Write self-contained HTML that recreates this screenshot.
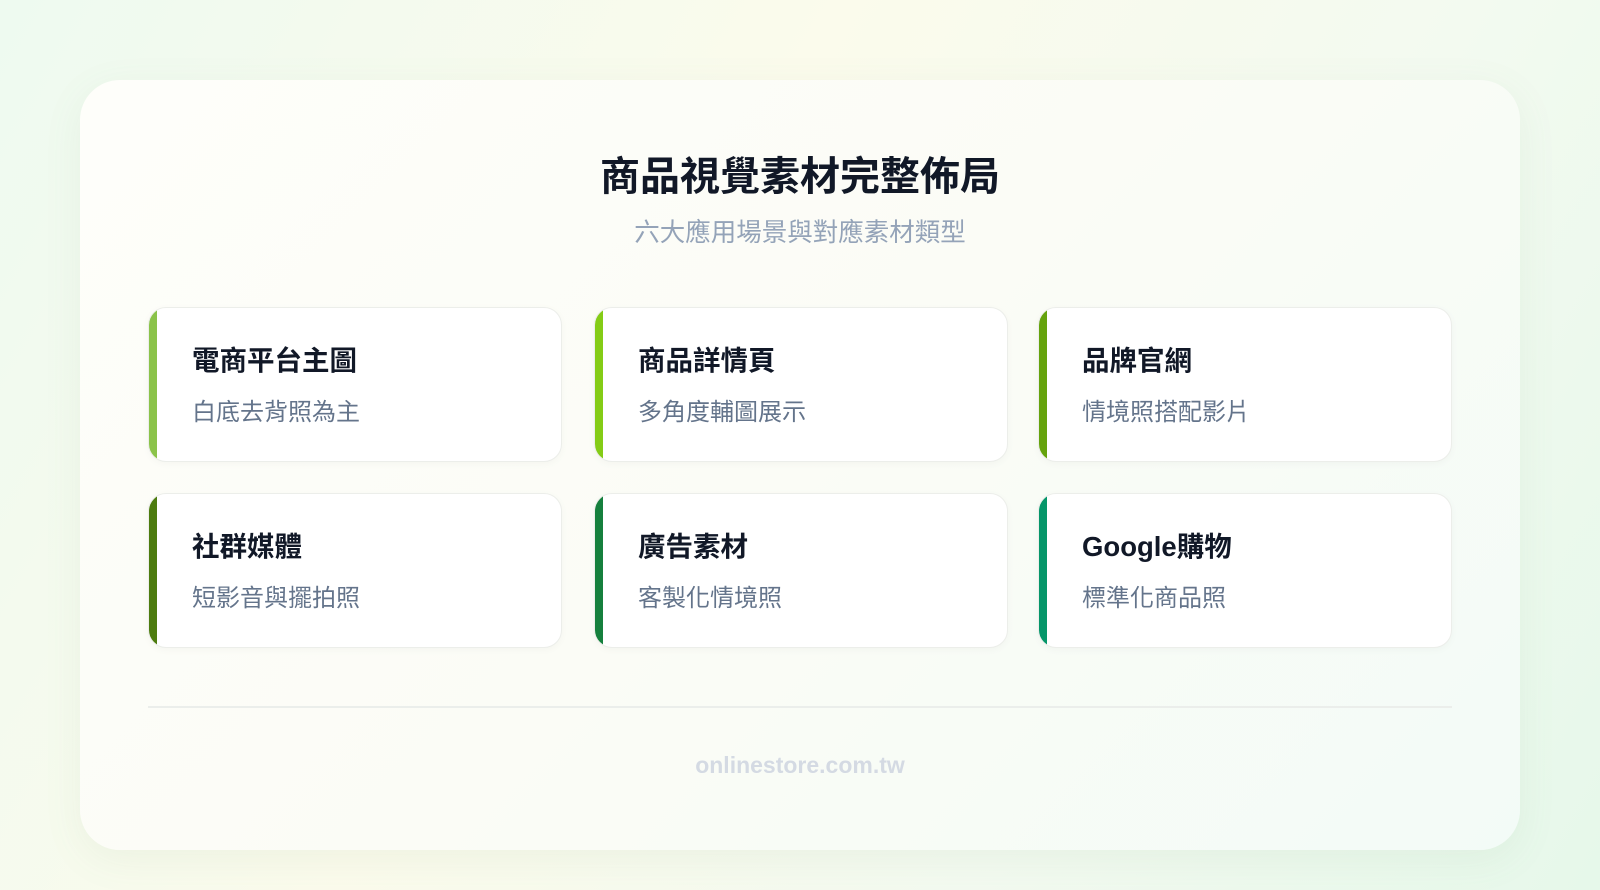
<!DOCTYPE html>
<html><head><meta charset="utf-8"><style>
*{margin:0;padding:0;box-sizing:border-box}
html,body{width:1600px;height:890px;overflow:hidden}
body{font-family:"Liberation Sans","Noto Sans CJK TC",sans-serif;background:linear-gradient(120deg,#eefaf0 0%,#fbfbec 40%,#f3faf0 70%,#e6f8ea 100%);position:relative}
.box{position:absolute;left:80px;top:80px;width:1440px;height:770px;border-radius:40px;background:linear-gradient(135deg,#fefefa 0%,#fbfcf6 50%,#f3fbf7 100%);box-shadow:0 10px 40px rgba(100,140,100,.08)}
h1{position:absolute;left:0;width:100%;top:150px;text-align:center;font-size:40px;font-weight:700;color:#111827;line-height:54px}
.sub{position:absolute;left:0;width:100%;top:216px;text-align:center;font-size:25.5px;color:#94a3b8;line-height:34px}
.card{position:absolute;width:414px;height:155px;background:#fff;border-radius:18px;border:1px solid #eceeea;box-shadow:0 2px 8px rgba(0,0,0,.03);overflow:hidden}
.card:before{content:"";position:absolute;left:0;top:0;bottom:0;width:8px;background:var(--c)}
.card .t{position:absolute;left:43px;top:35px;font-size:27.5px;font-weight:700;color:#111827;line-height:36px}
.card .d{position:absolute;left:43px;top:89px;font-size:24px;color:#64748b;line-height:32px}
.hr{position:absolute;left:148px;width:1304px;top:706px;height:2px;background:#ebeeeb}
.ft{position:absolute;left:0;width:100%;top:750px;text-align:center;font-size:23px;font-weight:700;color:#d4dae3;line-height:30px}
</style></head><body>
<div class="box"></div>
<h1>商品視覺素材完整佈局</h1>
<div class="sub">六大應用場景與對應素材類型</div>
<div class="card" style="left:148px;top:307px;--c:#8bc34a"><div class="t">電商平台主圖</div><div class="d">白底去背照為主</div></div>
<div class="card" style="left:594px;top:307px;--c:#84cc16"><div class="t">商品詳情頁</div><div class="d">多角度輔圖展示</div></div>
<div class="card" style="left:1038px;top:307px;--c:#65a30d"><div class="t">品牌官網</div><div class="d">情境照搭配影片</div></div>
<div class="card" style="left:148px;top:493px;--c:#4d7c0f"><div class="t">社群媒體</div><div class="d">短影音與擺拍照</div></div>
<div class="card" style="left:594px;top:493px;--c:#15803d"><div class="t">廣告素材</div><div class="d">客製化情境照</div></div>
<div class="card" style="left:1038px;top:493px;--c:#059669"><div class="t">Google購物</div><div class="d">標準化商品照</div></div>
<div class="hr"></div>
<div class="ft">onlinestore.com.tw</div>
</body></html>
